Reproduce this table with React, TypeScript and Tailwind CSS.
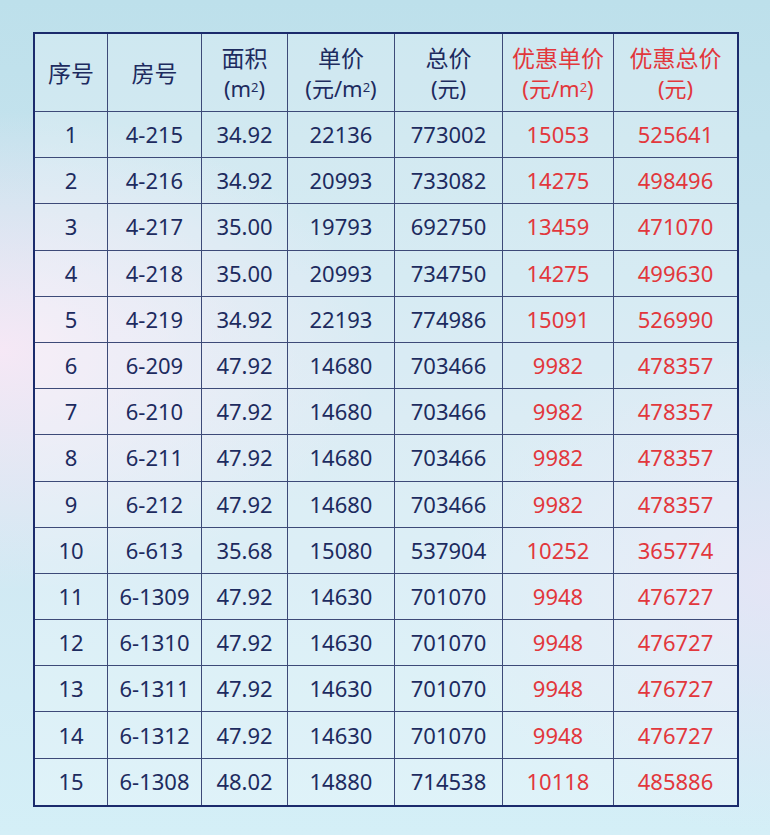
const rows: [string, string, string, string, string, string, string][] = [
  ["1", "4-215", "34.92", "22136", "773002", "15053", "525641"],
  ["2", "4-216", "34.92", "20993", "733082", "14275", "498496"],
  ["3", "4-217", "35.00", "19793", "692750", "13459", "471070"],
  ["4", "4-218", "35.00", "20993", "734750", "14275", "499630"],
  ["5", "4-219", "34.92", "22193", "774986", "15091", "526990"],
  ["6", "6-209", "47.92", "14680", "703466", "9982", "478357"],
  ["7", "6-210", "47.92", "14680", "703466", "9982", "478357"],
  ["8", "6-211", "47.92", "14680", "703466", "9982", "478357"],
  ["9", "6-212", "47.92", "14680", "703466", "9982", "478357"],
  ["10", "6-613", "35.68", "15080", "537904", "10252", "365774"],
  ["11", "6-1309", "47.92", "14630", "701070", "9948", "476727"],
  ["12", "6-1310", "47.92", "14630", "701070", "9948", "476727"],
  ["13", "6-1311", "47.92", "14630", "701070", "9948", "476727"],
  ["14", "6-1312", "47.92", "14630", "701070", "9948", "476727"],
  ["15", "6-1308", "48.02", "14880", "714538", "10118", "485886"],
];

const sq = <sup className="text-[13px] relative -top-[5px]">2</sup>;

const headers: { top: string; sub?: React.ReactNode; red?: boolean }[] = [
  { top: "序号" },
  { top: "房号" },
  { top: "面积", sub: <>(m{sq})</> },
  { top: "单价", sub: <>(元/m{sq})</> },
  { top: "总价", sub: "(元)" },
  { top: "优惠单价", sub: <>(元/m{sq})</>, red: true },
  { top: "优惠总价", sub: "(元)", red: true },
];

const grid = "grid grid-cols-[73px_94px_86px_107px_108px_111px_123px]";

export default function App() {
  return (
    <div
      className="w-[770px] h-[835px] pt-[32px] pl-[33px] bg-[radial-gradient(ellipse_at_0%_42%,rgba(248,232,246,0.95),transparent_35%),radial-gradient(ellipse_at_100%_70%,rgba(232,228,246,0.8),transparent_30%),linear-gradient(180deg,#bde0eb_0%,#cfe6f1_50%,#d4eff7_100%)]"
      style={{ fontFamily: '"Noto Sans", "Noto Sans CJK SC", sans-serif' }}
    >
      <div className="w-[706px] border-2 border-[#1b2b6c] bg-white/25 text-[22px] text-[#1d2b5f]">
        <div className={`${grid} h-[78px] border-b border-[#3d4a78]`}>
          {headers.map((h, i) => (
            <div
              key={i}
              className={`flex flex-col items-center justify-center leading-[30px] ${i < 6 ? "border-r border-[#3d4a78]" : ""} ${h.red ? "text-[#e2373c]" : ""}`}
            >
              <div className="text-[23px]">{h.top}</div>
              {h.sub && <div>{h.sub}</div>}
            </div>
          ))}
        </div>
        {rows.map((r, ri) => (
          <div
            key={ri}
            className={`${grid} h-[46.2px] ${ri < rows.length - 1 ? "border-b border-[#3d4a78]" : ""}`}
          >
            {r.map((c, ci) => (
              <div
                key={ci}
                className={`flex items-center justify-center ${ci < 6 ? "border-r border-[#3d4a78]" : ""} ${ci >= 5 ? "text-[#e2373c]" : ""}`}
              >
                {c}
              </div>
            ))}
          </div>
        ))}
      </div>
    </div>
  );
}
